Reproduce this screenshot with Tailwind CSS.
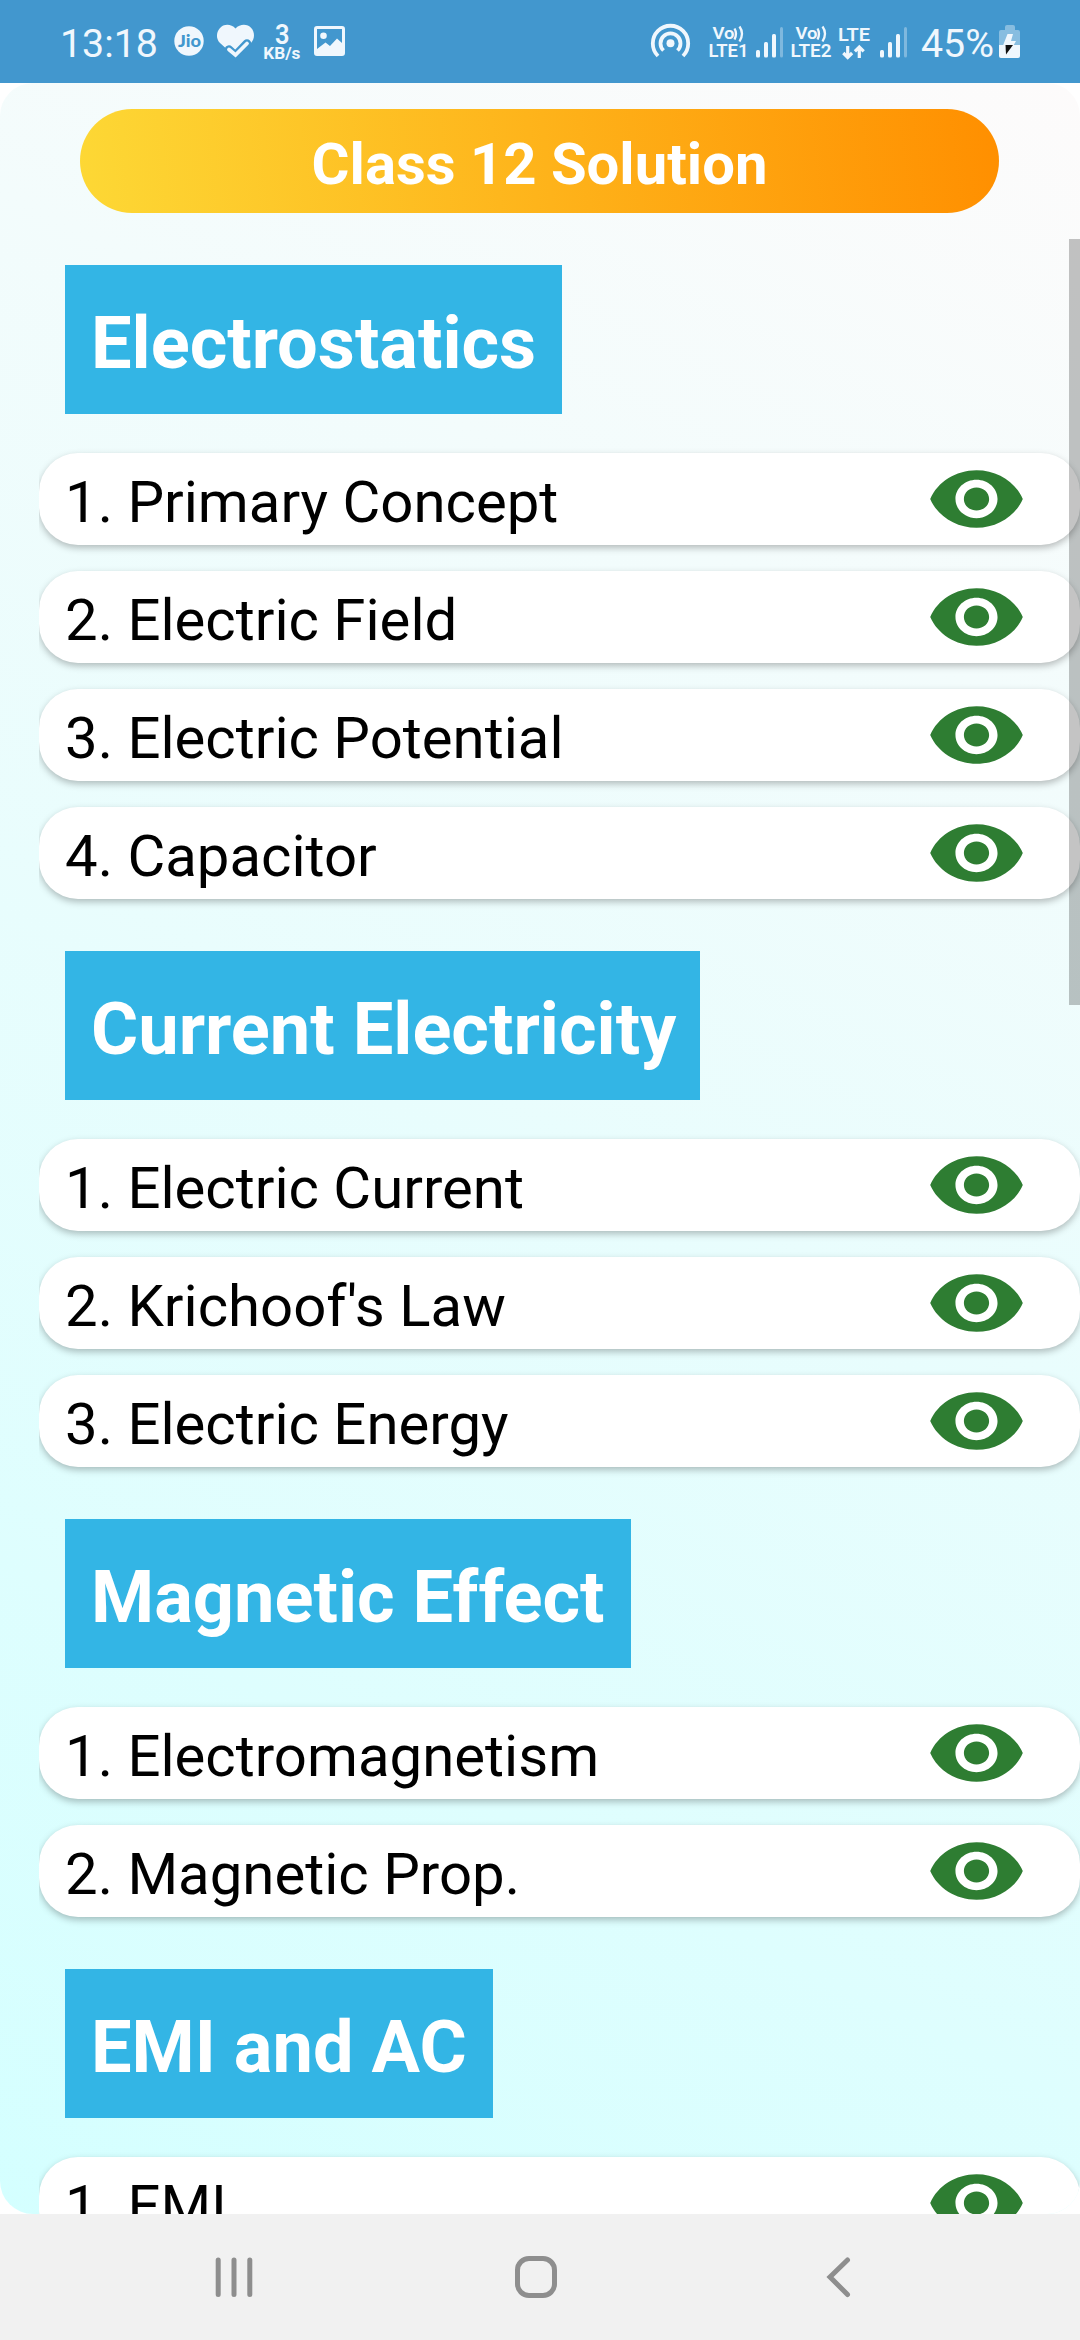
<!DOCTYPE html>
<html lang="en">
<head>
<meta charset="utf-8">
<title>Class 12 Solution</title>
<script src="https://cdn.jsdelivr.net/npm/@tailwindcss/browser@4"></script>
</head>
<body class="w-[1080px] h-[2340px] overflow-hidden flex flex-col bg-white font-[Roboto,sans-serif]">
<svg class="hidden">
  <symbol id="eye" viewBox="0 0 24 24" preserveAspectRatio="none"><path fill="#2e7d32" d="M12 4.5C7 4.5 2.73 7.61 1 12c1.73 4.39 6 7.5 11 7.5s9.27-3.11 11-7.5c-1.73-4.39-6-7.5-11-7.5zM12 17c-2.76 0-5-2.24-5-5s2.24-5 5-5 5 2.24 5 5-2.24 5-5 5zm0-8c-1.66 0-3 1.34-3 3s1.34 3 3 3 3-1.34 3-3-1.34-3-3-3z"/></symbol>
  <symbol id="bars" viewBox="0 0 27 31"><g fill="#f0f7fd"><rect x="0" y="23" width="4" height="7.5" rx="1.5"/><rect x="8" y="15" width="4" height="15.5" rx="1.5"/><rect x="16" y="7" width="4" height="23.5" rx="1.5"/><rect x="24" y="0" width="3" height="30.500" rx="1.5" opacity=".35"/></g></symbol>
</svg>

<header class="h-[83px] shrink-0 bg-[#4297ce]">
  <svg class="block" width="1080" height="83" viewBox="0 0 1080 83" fill="#f0f7fd" font-family="Roboto, sans-serif">
    <text x="60" y="57" font-size="39.500" textLength="98" lengthAdjust="spacingAndGlyphs">13:18</text>
    <circle cx="189" cy="41" r="14.700"/>
    <text x="178" y="46.500" font-size="16" font-weight="900" font-family="Lato, sans-serif" fill="#4297ce" textLength="23" lengthAdjust="spacingAndGlyphs">Jio</text>
    <path d="M235.500 28.500C231 23.500 223.500 23.800 219.800 28.200C216 32.600 216 38.800 220 43L235.500 57L251 43C255 38.800 255 32 251.200 28C247.500 23.800 240 23.700 235.500 28.500Z"/>
    <path d="M229 49.500L235.500 55.500L247 43.500" fill="none" stroke="#4297ce" stroke-width="8.500" stroke-linecap="round"/>
    <path d="M229 49.500L235.500 55L247 43.500" fill="none" stroke="#f0f7fd" stroke-width="3.800" stroke-linecap="round"/>
    <text x="282.300" y="44" font-size="27.500" font-weight="600" text-anchor="middle" textLength="14.500" lengthAdjust="spacingAndGlyphs">3</text>
    <text x="263.300" y="59" font-size="16" font-weight="700" textLength="37" lengthAdjust="spacingAndGlyphs">KB/s</text>
    <path fill-rule="evenodd" d="M317 26h25a3 3 0 0 1 3 3v24a3 3 0 0 1-3 3h-25a3 3 0 0 1-3-3V29a3 3 0 0 1 3-3zM317 29V49L325.500 42.500L330 46L337 38.500L342 43V29zM323.500 32.500a3.300 3.300 0 1 1 0 6.600a3.300 3.300 0 0 1 0-6.600z"/>
    <g fill="none" stroke="#f0f7fd" stroke-width="3.800"><path d="M658 56A17.700 17.700 0 1 1 683 56"/><path d="M663.500 50.500A10 10 0 1 1 677.500 50.500"/></g>
    <circle cx="670.500" cy="43.300" r="4"/>
    <g font-size="18" font-weight="600">
      <text x="712.500" y="39" font-size="17" textLength="22" lengthAdjust="spacingAndGlyphs">Vo</text>
      <text x="708.500" y="57" textLength="40" lengthAdjust="spacingAndGlyphs">LTE1</text>
      <text x="795.500" y="39" font-size="17" textLength="22" lengthAdjust="spacingAndGlyphs">Vo</text>
      <text x="790.500" y="57" textLength="41" lengthAdjust="spacingAndGlyphs">LTE2</text>
      <text x="838" y="40.500" font-size="19" textLength="32" lengthAdjust="spacingAndGlyphs">LTE</text>
    </g>
    <g fill="none" stroke="#f0f7fd" stroke-width="2.300"><path d="M734.500 28.500Q737.500 33.500 734.500 39.500M739.500 26.500Q744.500 33.500 739.500 41.500M817.500 28.500Q820.500 33.500 817.500 39.500M822.500 26.500Q827.500 33.500 822.500 41.500"/></g>
    <use href="#bars" x="756" y="27" width="27" height="31"/>
    <use href="#bars" x="880" y="27" width="27" height="31"/>
    <g fill="none" stroke="#f0f7fd" stroke-width="3.200"><path d="M847.700 46V57M843.300 53L847.700 57.400L852.100 53M859.300 58V47M854.900 51.300L859.300 46.900L863.700 51.300"/></g>
    <text x="921" y="57" font-size="39.500" textLength="73" lengthAdjust="spacingAndGlyphs">45%</text>
    <path opacity=".4" d="M1005 27a2 2 0 0 1 2-2h6a2 2 0 0 1 2 2v3h3a2 2 0 0 1 2 2v13h-21V32a2 2 0 0 1 2-2h4z"/>
    <path d="M999 45h21v11a2 2 0 0 1-2 2h-17a2 2 0 0 1-2-2z"/>
    <path d="M1007.500 34h5.500l-2 7h5l-2.500 4.500h-10.500z"/>
    <path fill="#111" d="M1005.500 45h7.500l-7 9.500z"/>
  </svg>
</header>

<main class="relative h-[2131px] shrink-0 overflow-hidden rounded-[33px] bg-[linear-gradient(206.87deg,#fdfbfb,#d4ffff)] flex flex-col">
  <h1 class="mt-[26px] ml-[80px] w-[919px] h-[104px] shrink-0 rounded-full bg-[linear-gradient(83.5deg,#fdd835,#ff8f00)] text-white font-bold text-[58px] leading-[110px] text-center">Class 12 Solution</h1>
  <div id="list" class="ml-[39px] mt-[26px] pt-[26px] flex-1 min-h-0 overflow-hidden flex flex-col"></div>
  <div class="absolute right-0 top-[156px] w-[11px] h-[766px] bg-black/23"></div>
</main>

<nav class="h-[126px] shrink-0 bg-[#f1f1f1]">
  <svg class="block" width="1080" height="126" viewBox="0 0 1080 126" fill="none" stroke="#8e8e8e" stroke-width="5" stroke-linecap="round">
    <path d="M218.200 46V80.500M234 46V80.500M249.800 46V80.500"/>
    <rect x="517.500" y="44.500" width="37" height="37" rx="11.500"/>
    <path d="M847.500 46L830 63L847.500 80.500"/>
  </svg>
</nav>
<template id="heading"><h2 class="ml-[26px] h-[149px] shrink-0 self-start bg-[#33b5e5] px-[26px] text-white font-bold text-[72.200px] leading-[157px] whitespace-nowrap"></h2></template>
<template id="row"><div class="h-[92px] shrink-0 rounded-[39px] bg-white shadow-[0_3px_7px_rgba(0,0,0,0.26)] pl-[26px] pr-[53px] flex items-center justify-between text-black text-[58.100px] leading-[92px]"><span class="whitespace-nowrap pt-1.5"></span><svg class="w-[101px] h-[92px]"><use href="#eye"/></svg></div></template>
<script>
const sections = [
  ["Electrostatics", 497, ["Primary Concept", "Electric Field", "Electric Potential", "Capacitor"]],
  ["Current Electricity", 635, ["Electric Current", "Krichoof's Law", "Electric Energy"]],
  ["Magnetic Effect", 566, ["Electromagnetism", "Magnetic Prop."]],
  ["EMI and AC", 428, ["EMI"]]
];
const list = document.getElementById("list");
for (const [title, width, items] of sections) {
  const section = document.createElement("section");
  section.className = "flex flex-col shrink-0 mb-[52px]";
  const h = document.getElementById("heading").content.firstElementChild.cloneNode(true);
  h.textContent = title;
  h.style.width = width + "px";
  section.append(h);
  const rows = document.createElement("div");
  rows.className = "mt-[39px] flex flex-col gap-[26px]";
  items.forEach((item, i) => {
    const r = document.getElementById("row").content.firstElementChild.cloneNode(true);
    r.querySelector("span").textContent = `${i + 1}. ${item}`;
    rows.append(r);
  });
  section.append(rows);
  list.append(section);
}
</script>
</body>
</html>
